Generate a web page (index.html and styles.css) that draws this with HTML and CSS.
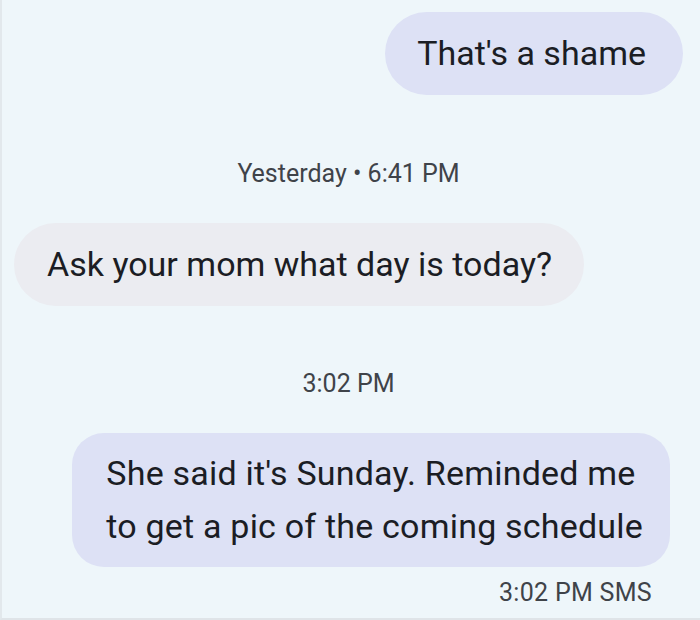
FILE: index.html
```html
<!DOCTYPE html>
<html>
<head>
    <meta charset="utf-8" />
    <title>Messages</title>
    <link rel="stylesheet" href="styles.css">
</head>
<body>
    <main class="thread">
        <div class="row out">
            <p class="bubble sent">That's a shame</p>
        </div>
        <p class="stamp">Yesterday &bull; 6:41 PM</p>
        <div class="row in">
            <p class="bubble recv">Ask your mom what day is today?</p>
        </div>
        <p class="stamp later">3:02 PM</p>
        <div class="row out">
            <p class="bubble sent wide">She said it's Sunday. Reminded me<br />to get a pic of the coming schedule</p>
        </div>
        <p class="meta">3:02 PM SMS</p>
    </main>
</body>
</html>
```

FILE: styles.css
```css
* {padding: 0;margin: 0;box-sizing: border-box;}
html, body {height: 100%;}
body {
    background: #eef6fa;
    font-family: Roboto, "Liberation Sans", sans-serif;
    color: #1b1d24;
    border-left: 2px solid #e2e8ec;
    border-bottom: 2px solid #dfe4e8;
    overflow: hidden;
}
.thread {display: flex;flex-direction: column;padding: 12px 17px 0 12px;}
.row {display: flex;}
.row.out {justify-content: flex-end;}
.row.in {justify-content: flex-start;}
.bubble {font-size: 34px;line-height: 53px;padding: 15px 37px 15px 32px;border-radius: 42px;}
.recv {background: #ebecf1;padding: 15px 32px 15px 33px;}
.sent {background: #dde1f5;}
.wide {border-radius: 32px;padding: 14px 27px 14px 34px;margin-right: 13px;letter-spacing: .2px;}
.stamp {text-align: center;font-size: 25px;line-height: 26px;color: #3f4349;margin: 66px 0 36px;}
.stamp.later {margin: 65px 0 36px;}
.meta {text-align: right;font-size: 25px;line-height: 26px;color: #3f4349;margin: 13px 31px 0 0;letter-spacing: .3px;}
```
